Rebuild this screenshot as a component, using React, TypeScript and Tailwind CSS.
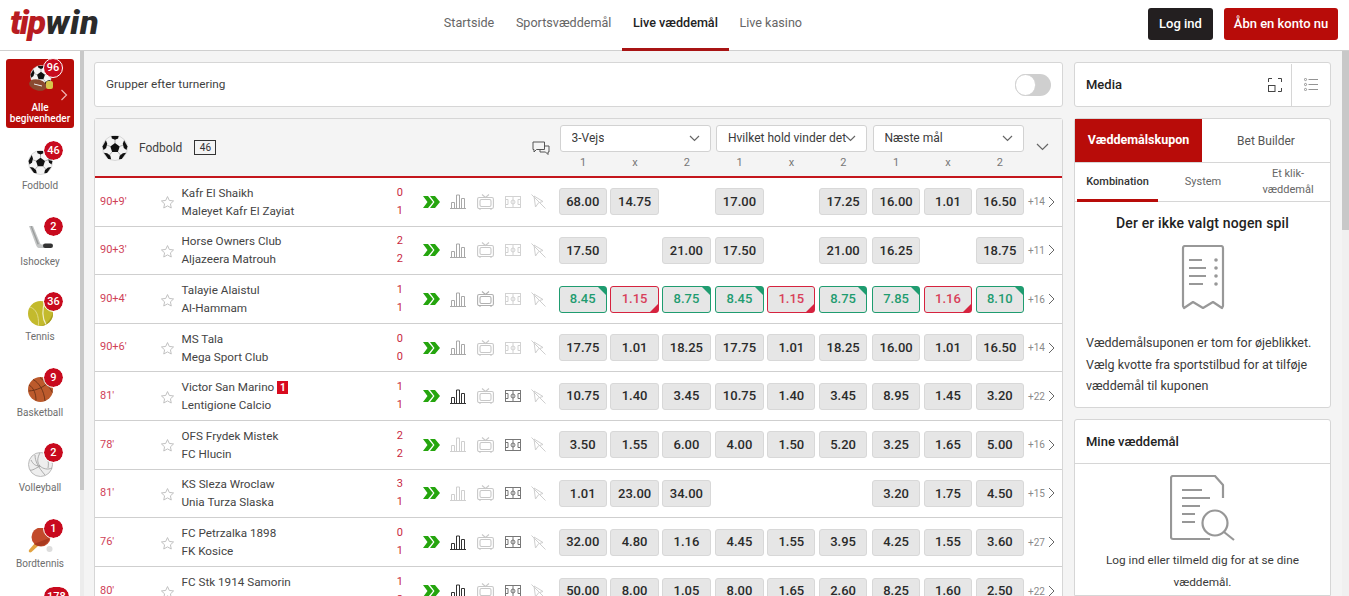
import React from "react";

type Odd = string | null;
type Match = {
  time: string; a: string; b: string; s1: string; s2: string; odds: Odd[]; more: string;
  card?: boolean; stats?: 0 | 1 | 2; field?: 0 | 1; tv?: 0 | 1; trend?: boolean;
};

const matches: Match[] = [
  { time: "90+9'", a: "Kafr El Shaikh", b: "Maleyet Kafr El Zayiat", s1: "0", s2: "1", odds: ["68.00", "14.75", null, "17.00", null, "17.25", "16.00", "1.01", "16.50"], more: "+14", stats: 1 },
  { time: "90+3'", a: "Horse Owners Club", b: "Aljazeera Matrouh", s1: "2", s2: "2", odds: ["17.50", null, "21.00", "17.50", null, "21.00", "16.25", null, "18.75"], more: "+11", stats: 1 },
  { time: "90+4'", a: "Talayie Alaistul", b: "Al-Hammam", s1: "1", s2: "1", odds: ["8.45", "1.15", "8.75", "8.45", "1.15", "8.75", "7.85", "1.16", "8.10"], more: "+16", stats: 1, trend: true },
  { time: "90+6'", a: "MS Tala", b: "Mega Sport Club", s1: "0", s2: "0", odds: ["17.75", "1.01", "18.25", "17.75", "1.01", "18.25", "16.00", "1.01", "16.50"], more: "+14", stats: 1 },
  { time: "81'", a: "Victor San Marino", b: "Lentigione Calcio", s1: "1", s2: "1", odds: ["10.75", "1.40", "3.45", "10.75", "1.40", "3.45", "8.95", "1.45", "3.20"], more: "+22", card: true, stats: 2, field: 1 },
  { time: "78'", a: "OFS Frydek Mistek", b: "FC Hlucin", s1: "2", s2: "2", odds: ["3.50", "1.55", "6.00", "4.00", "1.50", "5.20", "3.25", "1.65", "5.00"], more: "+16", stats: 0, field: 1 },
  { time: "81'", a: "KS Sleza Wroclaw", b: "Unia Turza Slaska", s1: "3", s2: "1", odds: ["1.01", "23.00", "34.00", null, null, null, "3.20", "1.75", "4.50"], more: "+15", stats: 0, field: 1 },
  { time: "76'", a: "FC Petrzalka 1898", b: "FK Kosice", s1: "0", s2: "1", odds: ["32.00", "4.80", "1.16", "4.45", "1.55", "3.95", "4.25", "1.55", "3.60"], more: "+27", stats: 2, field: 1 },
  { time: "80'", a: "FC Stk 1914 Samorin", b: "MFK Tatran Mikulas", s1: "1", s2: "2", odds: ["50.00", "8.00", "1.05", "8.00", "1.65", "2.60", "8.25", "1.60", "2.50"], more: "+22", stats: 2, field: 1 },
];

function Ball({ size = 25 }: { size?: number }) {
  return (
    <svg width={size} height={size} viewBox="0 0 100 100">
      <circle cx="50" cy="50" r="48" fill="#f4f4f4" stroke="#bbb" strokeWidth="2" />
      <g stroke="#999" strokeWidth="3" fill="none">
        <path d="M50 31V15M68 44l15-6M61 65l11 13M39 65L28 78M32 44l-15-6" />
      </g>
      <g fill="#111">
        <polygon points="50,31 68,44 61,65 39,65 32,44" />
        <polygon points="36,4 64,4 62,13 50,18 38,13" />
        <polygon points="85,20 98,44 94,58 84,50 80,34" />
        <polygon points="93,68 76,92 65,93 68,80 80,70" />
        <polygon points="7,68 24,92 35,93 32,80 20,70" />
        <polygon points="15,20 2,44 6,58 16,50 20,34" />
      </g>
    </svg>
  );
}

function Puck() {
  return (
    <svg width="25" height="25" viewBox="0 0 25 25">
      <path d="M1 0h4l7 17c.5 1 1 1.500 2 1.500h3v3.500h-5c-2 0-3-.5-4-3z" fill="#c4c6c6" />
      <path d="M2.500 0h1.200l7.300 18-1.500.5z" fill="#9a9c9c" />
      <rect x="15" y="17.500" width="10" height="4.500" rx="2.200" fill="#333" />
    </svg>
  );
}

function TennisBall() {
  return (
    <svg width="25" height="25" viewBox="0 0 25 25">
      <circle cx="12.500" cy="12.500" r="12.500" fill="#c3ba2d" />
      <path d="M12.500 25a12.500 12.500 0 0 0 12.500-12.500v-1c-3 9-7 12-12.500 13.500z" fill="#a59c1e" />
      <path d="M17 1c-3 7-3 16 1 22.500" stroke="#f2eecb" strokeWidth="1.200" fill="none" />
      <path d="M2 6c6 2 9 8 8.500 18.500" stroke="#e6e09a" strokeWidth="0.800" fill="none" />
    </svg>
  );
}

function Basket() {
  return (
    <svg width="25" height="25" viewBox="0 0 25 25">
      <circle cx="12.500" cy="12.500" r="12.500" fill="#bc5a2c" />
      <g stroke="#5f2c14" strokeWidth="0.800" fill="none">
        <path d="M0.500 14c8-.5 16-4 22-10.500M5 2.500c6 3 11 11 12 21.500M12 0.500c5 4 10 10 12.500 15M1 8c5 3 7 9 7 15.500" />
      </g>
    </svg>
  );
}

function Volley() {
  return (
    <svg width="25" height="25" viewBox="0 0 25 25">
      <circle cx="12.500" cy="12.500" r="12" fill="#eee" stroke="#bbb" />
      <g stroke="#999" strokeWidth="0.800" fill="none">
        <path d="M12 1c-3 5-3 10 0 13 3 3 8 4 12 2M12 14c-4 2-8 5-10 4M7 3c0 6 3 12 10 20M17 2c3 4 4 8 3 14M3 8c2 4 4 6 9 6" />
      </g>
    </svg>
  );
}

function Paddle() {
  return (
    <svg width="25" height="25" viewBox="0 0 25 25">
      <path d="M7 15L1 22c-1 2 1 3 2.500 2L10 18z" fill="#e3a341" />
      <circle cx="13" cy="9" r="9.500" fill="#c24a2b" />
      <path d="M6 16a9.500 9.500 0 0 0 13-1c1-1 2-3 2.500-5z" fill="#a93a20" />
      <circle cx="21.500" cy="21" r="3" fill="#ddd" />
    </svg>
  );
}

function AllIcon() {
  return (
    <div className="relative w-[25px] h-[27px]">
      <div className="absolute left-[1px] top-0"><Ball size={22} /></div>
      <svg className="absolute left-0 top-[13px]" width="26" height="14" viewBox="0 0 26 14">
        <ellipse cx="9" cy="7" rx="9" ry="5.500" fill="#8a4a30" transform="rotate(15 9 7)" />
        <path d="M5 6l8 2" stroke="#eee" strokeWidth="1" />
        <rect x="17" y="3" width="7" height="8" rx="2" fill="#d6c64a" />
      </svg>
    </div>
  );
}

function Badge({ n }: { n: string }) {
  return (
    <span className="absolute left-[44px] top-[1px] min-w-[19px] h-[19px] px-[3px] rounded-full bg-[#c80a1e] text-white text-[11px] font-medium leading-[19px] text-center outline outline-1 outline-white">
      {n}
    </span>
  );
}

function SportItem({ label, n, icon, cls = "" }: { label: string; n: string; icon: React.ReactNode; cls?: string }) {
  return (
    <div className={`relative h-[75.5px] shrink-0 flex flex-col items-center pt-[10px] ${cls}`}>
      <Badge n={n} />
      <div className="h-[25px] w-[25px]">{icon}</div>
      <div className="mt-[5px] text-[10px] leading-[12px] text-[#6e6e6e]">{label}</div>
    </div>
  );
}

function Sidebar() {
  return (
    <aside className="w-[80px] shrink-0 bg-white overflow-hidden flex flex-col pt-[8px]">
      <div className="relative mx-[6px] h-[69px] shrink-0 rounded-[3px] bg-[#b80c09] flex flex-col items-center text-white">
        <div className="mt-[6px] h-[27px] relative right-[-1px]"><AllIcon /></div>
        <span className="absolute left-[37px] top-[-1px] w-[20px] h-[20px] rounded-full bg-[#c80a1e] border border-white text-[11px] font-medium leading-[18px] text-center">96</span>
        <svg className="absolute left-[54px] top-[30px]" width="8" height="12" viewBox="0 0 8 12" fill="none" stroke="#f0b4b4" strokeWidth="1.200"><path d="M1.500 1l5 5-5 5" /></svg>
        <div className="mt-[10px] text-[10px] font-medium leading-[11px] text-center">Alle<br />begivenheder</div>
      </div>
      <div className="h-[12px] shrink-0" />
      <SportItem label="Fodbold" n="46" icon={<Ball />} />
      <SportItem label="Ishockey" n="2" icon={<Puck />} />
      <SportItem label="Tennis" n="36" icon={<TennisBall />} />
      <SportItem label="Basketball" n="9" icon={<Basket />} />
      <SportItem label="Volleyball" n="2" icon={<Volley />} />
      <SportItem label="Bordtennis" n="1" icon={<Paddle />} />
      <SportItem label="Esport" n="178" cls="-mt-[7px]" icon={<div className="w-[25px] h-[25px]" />} />
    </aside>
  );
}

function Chevrons() {
  return (
    <svg width="17" height="12" viewBox="0 0 17 12" fill="#25a50e">
      <path d="M0 0h5l5 6-5 6H0l4.500-6z" />
      <path d="M7 0h5l5 6-5 6H7l4.500-6z" />
    </svg>
  );
}

function Stats({ level }: { level: 0 | 1 | 2 }) {
  const c = level === 2 ? "#333" : level === 1 ? "#a8a8a8" : "#cfcfcf";
  return (
    <svg width="16" height="15" viewBox="0 0 16 15" fill="none" stroke={c} strokeWidth="1">
      <path d="M0 14.500h16M1.500 14V8.500h3V14M6.500 14V1h3v13M11.500 14V4.500h3V14" />
    </svg>
  );
}

function Tv({ on }: { on?: boolean }) {
  const c = on ? "#b0b0b0" : "#c8c8c8";
  return (
    <svg width="17" height="16" viewBox="0 0 17 16" fill="none" stroke={c} strokeWidth="1.100">
      <rect x="0.600" y="3.500" width="15.800" height="11" rx="1.500" />
      <rect x="3" y="5.500" width="11" height="7" rx="1.500" />
      <path d="M5 0.500l3.500 3 3.500-3M3 14.500v1.500M14 14.500v1.500" />
    </svg>
  );
}

function Field({ on }: { on?: 0 | 1 }) {
  const c = on ? "#777" : "#d2d2d2";
  return (
    <svg width="16" height="12" viewBox="0 0 16 12" fill="none" stroke={c} strokeWidth="1">
      <rect x="0.500" y="0.500" width="15" height="11" />
      <path d="M8 0.500v11M0.500 3.500h2.500v5H0.500M15.500 3.500H13v5h2.500" />
      <circle cx="8" cy="6" r="2" />
    </svg>
  );
}

function CursorOff() {
  return (
    <svg width="15" height="15" viewBox="0 0 15 15" fill="none" stroke="#cfcfcf" strokeWidth="1">
      <path d="M3 2l1.500 11 3-4.200 4.500-1.300z" />
      <path d="M0.500 0.500l14 14" />
    </svg>
  );
}

function Odds({ v, kind }: { v: Odd; kind?: "up" | "down" }) {
  if (!v) return <div className="h-[27px]" />;
  const cls = kind === "up"
    ? "border-[#1f9c70] text-[#1f9c70]"
    : kind === "down"
      ? "border-[#d6233f] text-[#d8405a]"
      : "border-[#d8d8d8] text-[#2b2b2b]";
  return (
    <div className={`relative h-[27px] rounded-[3px] border bg-[#e6e6e6] flex items-center justify-center text-[13px] font-medium ${cls}`}>
      {v}
      {kind === "up" && <span className="absolute right-0 top-0 w-0 h-0 border-t-[8px] border-l-[8px] border-t-[#1f9c70] border-l-transparent" />}
      {kind === "down" && <span className="absolute right-0 bottom-0 w-0 h-0 border-b-[8px] border-l-[8px] border-b-[#d6233f] border-l-transparent" />}
    </div>
  );
}

function Star() {
  return (
    <svg width="15" height="15" viewBox="0 0 24 24" fill="none" stroke="#bdbdbd" strokeWidth="1.500" strokeLinejoin="round">
      <path d="M12 2.500l2.900 6.200 6.800.8-5 4.600 1.300 6.700-6-3.400-6 3.400 1.300-6.700-5-4.600 6.800-.8z" />
    </svg>
  );
}

function Row({ m }: { m: Match }) {
  return (
    <div className="h-[48.62px] shrink-0 flex items-center border-b border-[#cfcfcf] last:border-b-0 bg-white">
      <div className="w-[65px] pl-[5px] text-[11px] text-[#cf4258]">{m.time}</div>
      <div className="w-[22px] flex items-center pt-[2px]"><Star /></div>
      <div className="w-[210px] -ml-[0.500px] text-[11.700px] leading-[18px] text-[#444] whitespace-nowrap">
        <div className="flex items-center">{m.a}{m.card && <span className="ml-[3px] w-[11px] h-[13px] bg-[#d80a1e] text-white text-[10px] font-bold leading-[13px] text-center">1</span>}</div>
        <div>{m.b}</div>
      </div>
      <div className="w-[11.500px] text-right text-[11px] leading-[18px] text-[#c8283e]">
        <div>{m.s1}</div>
        <div>{m.s2}</div>
      </div>
      <div className="w-[155.600px] pl-[19.500px] flex items-center gap-[10.700px]">
        <Chevrons />
        <Stats level={m.stats ?? 1} />
        <Tv on={m.trend} />
        <Field on={m.field} />
        <CursorOff />
      </div>
      <div className="flex gap-[4.700px]">
        {[0, 3, 6].map((start) => (
          <div key={start} className="w-[152px] grid grid-cols-3 gap-[3.500px]">
            {m.odds.slice(start, start + 3).map((o, i) => (
              <Odds key={i} v={o} kind={m.trend ? (i === 1 ? "down" : "up") : undefined} />
            ))}
          </div>
        ))}
      </div>
      <div className="ml-[4px] flex items-center gap-[3px] text-[10px] text-[#8a8a8a]">
        {m.more}
        <svg width="7" height="12" viewBox="0 0 7 12" fill="none" stroke="#666" strokeWidth="1"><path d="M1 1l5 5-5 5" /></svg>
      </div>
    </div>
  );
}

function Select({ label }: { label: string }) {
  return (
    <div className="w-[152px]">
      <div className="h-[27px] mx-[0.500px] px-[11px] rounded-[3px] border border-[#d2d2d2] bg-white flex items-center text-[12px] text-[#3a3a3a] overflow-hidden relative">
        <span className="block max-w-[127px] overflow-hidden whitespace-nowrap leading-[24px] -mt-[1px]">{label}</span>
        <svg className="absolute right-[10px] top-[9px]" width="11" height="7" viewBox="0 0 11 7" fill="none" stroke="#666" strokeWidth="1.200"><path d="M1 1l4.500 4.500L10 1" /></svg>
      </div>
      <div className="grid grid-cols-3 gap-[3.500px] mt-[3px] text-[11px] leading-[15px] text-[#777] text-center">
        <span>1</span><span>x</span><span>2</span>
      </div>
    </div>
  );
}

function Main() {
  return (
    <main className="flex-1 min-w-0 pl-[10px] pt-[11px] flex flex-col gap-[11px] overflow-hidden">
      <div className="h-[45px] shrink-0 rounded-[3px] border border-[#d6d6d6] bg-white flex items-center justify-between pl-[11px] pr-[11px]">
        <span className="text-[11.800px] text-[#3f3f3f]">Grupper efter turnering</span>
        <div className="relative w-[36px] h-[22px] rounded-full bg-[#cfcfcf]">
          <div className="w-[21px] h-[22px] rounded-full bg-white border border-[#cfcfcf]" />
        </div>
      </div>
      <div className="shrink-0 rounded-t-[3px] border border-[#d6d6d6] flex flex-col">
        <div className="h-[59px] shrink-0 bg-[#f4f4f4] border-b-2 border-[#c4161c] flex">
          <div className="w-[464px] pl-[7px] flex items-center">
            <Ball size={26} />
            <span className="ml-[11px] text-[12px] text-[#3f3f3f]">Fodbold</span>
            <span className="ml-[12px] w-[22px] h-[15px] border border-[#333] text-[10px] leading-[13px] text-center text-[#333]">46</span>
            <svg className="ml-[316px] mt-[1px]" width="18" height="15" viewBox="0 0 18 15" fill="none" stroke="#555" strokeWidth="1">
              <path d="M1 1h11.500v7.500H4.500L2 11V8.500H1zM12.500 5H17v6h-1v2.500L13.500 11H8V8.500" />
            </svg>
          </div>
          <div className="flex gap-[4.500px] pt-[6px]">
            <Select label="3-Vejs" />
            <Select label="Hvilket hold vinder det" />
            <Select label="Næste mål" />
          </div>
          <div className="ml-[12px] pt-[24px]">
            <svg width="13" height="8" viewBox="0 0 13 8" fill="none" stroke="#666" strokeWidth="1.200"><path d="M1 1l5.500 5.500L12 1" /></svg>
          </div>
        </div>
        {matches.map((m, i) => <Row key={i} m={m} />)}
      </div>
    </main>
  );
}

function Receipt() {
  return (
    <svg width="44" height="66" viewBox="0 0 44 66" fill="none" stroke="#989898" strokeWidth="2.200" strokeLinejoin="round">
      <path d="M2 3a2 2 0 0 1 2-2h36a2 2 0 0 1 2 2v58l-1 2-9-6-10 6-10-6-9 6-1-2z" />
      <path d="M8 15h13M8 23h17M8 31h17M8 39h14" />
      <g fill="#989898" stroke="none">
        <circle cx="35" cy="15" r="1.800" /><circle cx="35" cy="23" r="1.800" /><circle cx="35" cy="31" r="1.800" /><circle cx="35" cy="39" r="1.800" />
      </g>
    </svg>
  );
}

function DocSearch() {
  return (
    <svg width="66" height="66" viewBox="0 0 66 66" fill="none" stroke="#979797" strokeWidth="2.200" strokeLinejoin="round">
      <path d="M40 64H3a2 2 0 0 1-2-2V3a2 2 0 0 1 2-2h42l8 9v13" />
      <path d="M12 15h20M12 23h28M12 31h18M12 39h13M12 47h13" />
      <circle cx="45" cy="48" r="12.500" />
      <path d="M54 57l10 8" />
    </svg>
  );
}

function RightCol() {
  return (
    <div className="w-[257px] shrink-0 ml-[11px] pt-[11px] flex flex-col gap-[11px]">
      <div className="h-[45px] shrink-0 rounded-[3px] border border-[#d6d6d6] bg-white flex items-center pl-[11px]">
        <span className="flex-1 text-[13px] font-medium text-[#222]">Media</span>
        <svg className="mr-[9px]" width="14" height="14" viewBox="0 0 14 14" fill="none" stroke="#444" strokeWidth="1">
          <path d="M0.500 4V0.500H4M10 0.500h3.500V4M13.500 10v3.500H10" />
          <rect x="0.500" y="7.500" width="6.500" height="6" />
        </svg>
        <div className="w-px h-[42px] bg-[#d6d6d6]" />
        <svg className="mx-[12px]" width="14" height="13" viewBox="0 0 14 13" fill="none" stroke="#888" strokeWidth="0.900">
          <circle cx="1.500" cy="1.500" r="1.100" /><circle cx="1.500" cy="6.500" r="1.100" /><circle cx="1.500" cy="11.500" r="1.100" />
          <path d="M4.500 1.500H14M4.500 6.500H14M4.500 11.500H14" />
        </svg>
      </div>
      <div className="h-[290px] shrink-0 rounded-[3px] border border-[#d6d6d6] bg-white flex flex-col">
        <div className="h-[44px] shrink-0 flex border-b border-[#d6d6d6]">
          <div className="w-[127px] bg-[#b80c09] text-white text-[12.500px] font-bold flex items-center justify-center">Væddemålskupon</div>
          <div className="flex-1 text-[12px] text-[#555] flex items-center justify-center">Bet Builder</div>
        </div>
        <div className="h-[39px] shrink-0 flex border-b border-[#d6d6d6] text-[11px] text-[#666]">
          <div className="relative w-[85px] flex items-center justify-center font-medium text-[#333]">
            Kombination
            <span className="absolute left-[2px] right-[2px] bottom-[-1px] h-[3px] bg-[#b80c09]" />
          </div>
          <div className="w-[86px] flex items-center justify-center">System</div>
          <div className="flex-1 flex items-center justify-center text-center leading-[16px]">Et klik-<br />væddemål</div>
        </div>
        <div className="text-center text-[14px] font-medium tracking-[0.15px] text-[#222] mt-[11px] leading-[20px]">Der er ikke valgt nogen spil</div>
        <div className="flex justify-center mt-[12px]"><Receipt /></div>
        <div className="px-[11px] mt-[21px] text-[12.500px] leading-[21.500px] text-[#3a3a3a] whitespace-nowrap">
          Væddemålsuponen er tom for øjeblikket.<br />
          Vælg kvotte fra sportstilbud for at tilføje<br />
          væddemål til kuponen
        </div>
      </div>
      <div className="flex-1 rounded-t-[3px] border border-[#d6d6d6] bg-white flex flex-col">
        <div className="h-[44px] shrink-0 border-b border-[#d6d6d6] pl-[11px] flex items-center text-[13px] font-medium text-[#222]">Mine væddemål</div>
        <div className="flex justify-center mt-[11px]"><DocSearch /></div>
        <div className="mt-[8px] px-[11px] text-center text-[11.800px] leading-[22px] text-[#3a3a3a]">Log ind eller tilmeld dig for at se dine væddemål.</div>
      </div>
    </div>
  );
}

export default function App() {
  const nav = ["Startside", "Sportsvæddemål", "Live væddemål", "Live kasino"];
  return (
    <div className="h-screen overflow-hidden flex flex-col bg-[#f4f4f4] font-['Roboto',sans-serif]">
      <header className="h-[51px] shrink-0 bg-white border-b border-[#cfcfcf] flex items-stretch pr-[11px]">
        <div className="w-[433px] shrink-0 pl-[10px] flex items-center">
          <span className="italic font-black text-[34px] leading-[34px] tracking-[-1.500px] text-[#b81c22] -mt-[7px]">tip</span>
          <span className="ml-[1px] italic font-black text-[34px] leading-[34px] tracking-[0.800px] text-[#2b2b2b] -mt-[7px]">win</span>
        </div>
        <nav className="flex-1 flex text-[12.600px]">
          {nav.map((n, i) => (
            <div key={n} className={`relative px-[10.800px] flex items-center pb-[4px] ${i === 2 ? "font-medium text-[#222]" : "text-[#666]"}`}>
              {n}
              {i === 2 && <span className="absolute left-0 right-0 bottom-[-1px] h-[3px] bg-[#a81414]" />}
            </div>
          ))}
        </nav>
        <div className="flex items-start pt-[8px] gap-[11px]">
          <button className="w-[65px] h-[32px] rounded-[3px] bg-[#231f20] text-white text-[13px] font-medium">Log ind</button>
          <button className="w-[114px] h-[32px] rounded-[3px] bg-[#b80c09] text-white text-[13px] font-medium">Åbn en konto nu</button>
        </div>
      </header>
      <div className="flex-1 min-h-0 flex">
        <Sidebar />
        <div className="w-[4px] shrink-0 flex flex-col bg-[#ececec]">
          <div className="h-[439px] bg-[#c8c8c8]" />
        </div>
        <Main />
        <RightCol />
        <div className="w-[7px] shrink-0 ml-[11px] bg-[#f0f0f0]">
          <div className="h-[179px] bg-[#c8c8c8]" />
        </div>
      </div>
    </div>
  );
}
